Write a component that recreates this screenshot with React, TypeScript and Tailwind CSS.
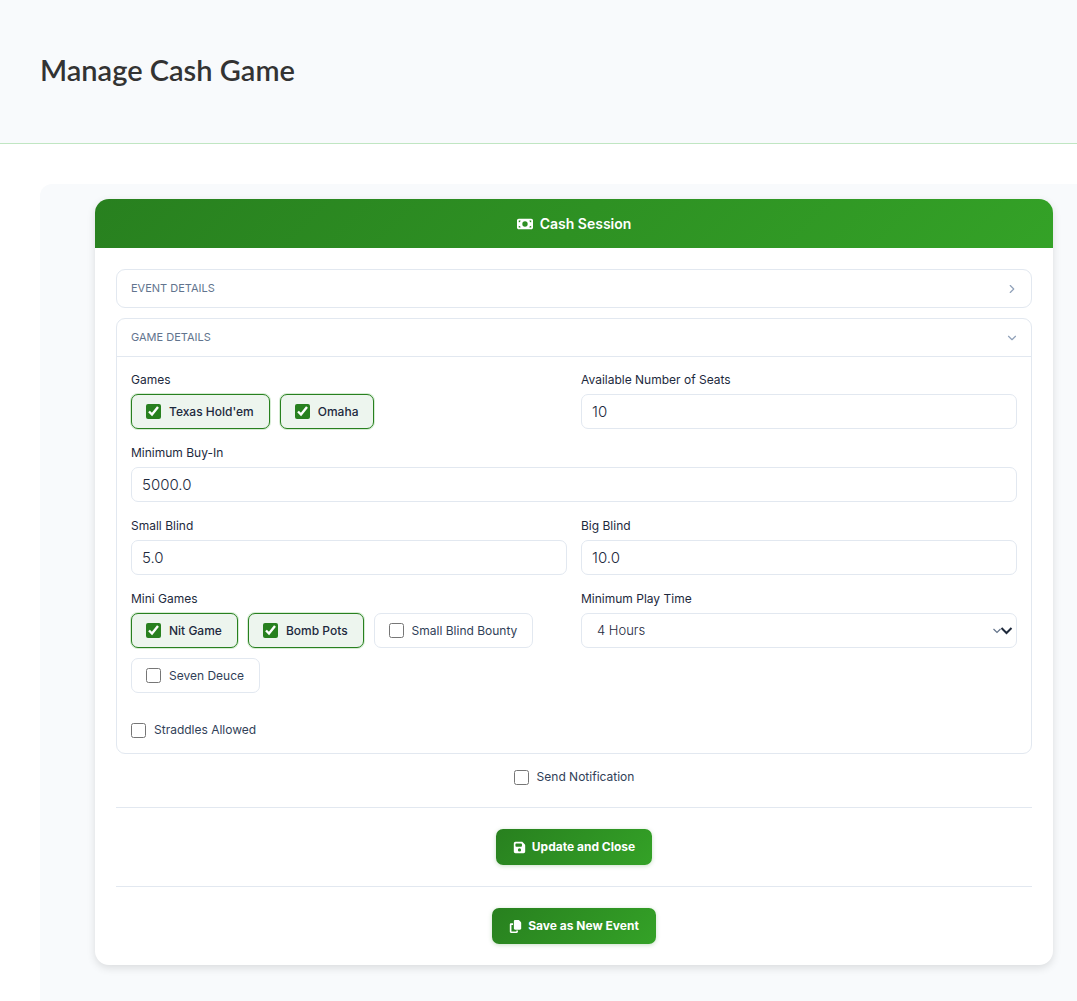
import { useState } from "react";
import type { ReactNode } from "react";
import { FaCopy, FaFloppyDisk, FaMoneyBill } from "react-icons/fa6";
import { LuChevronDown, LuChevronRight } from "react-icons/lu";

const games = [
  { id: "texas", label: "Texas Hold'em", checked: true },
  { id: "omaha", label: "Omaha", checked: true },
];

const miniGames = [
  { id: "nit", label: "Nit Game", checked: true },
  { id: "bomb", label: "Bomb Pots", checked: true },
  { id: "bounty", label: "Small Blind Bounty", checked: false },
  { id: "deuce", label: "Seven Deuce", checked: false },
];

const boxClass =
  "block h-[35px] w-full rounded-[7px] border border-slate-200 bg-white font-light text-slate-800 outline-none focus:border-[#28801f]";

const checkClass = "size-[15px] shrink-0 accent-[#28801f]";

function Chip({ id, label, checked }: { id: string; label: string; checked: boolean }) {
  const [on, setOn] = useState(checked);

  return (
    <label
      htmlFor={id}
      className={
        on
          ? "flex h-[35px] cursor-pointer items-center gap-2 rounded-[7px] border border-[#28801f] bg-[#edf5ee] pr-[15px] pl-3.5 text-xs font-medium text-slate-800 shadow-[0_0_0_1px_#34a22733]"
          : "flex h-[35px] cursor-pointer items-center gap-2 rounded-[7px] border border-slate-200 bg-white pr-[15px] pl-3.5 text-xs text-slate-700"
      }
    >
      <input id={id} type="checkbox" checked={on} onChange={() => setOn(!on)} className={checkClass} />
      {label}
    </label>
  );
}

function ChipGroup({ title, items }: { title: string; items: typeof games }) {
  return (
    <fieldset className="min-w-0">
      <legend className="mb-[3px] text-xs leading-[22px] text-slate-800">{title}</legend>
      <div className="flex flex-wrap gap-2.5">
        {items.map((item) => (
          <Chip key={item.id} {...item} />
        ))}
      </div>
    </fieldset>
  );
}

function TextField({ id, label, value, className }: { id: string; label: string; value: string; className?: string }) {
  return (
    <div className={className}>
      <label htmlFor={id} className="mb-[3px] block text-xs leading-[22px] text-slate-800">
        {label}
      </label>
      <input id={id} type="text" defaultValue={value} className={`${boxClass} px-2.5 text-[15px]`} />
    </div>
  );
}

function ActionButton({ icon, children }: { icon: ReactNode; children: ReactNode }) {
  return (
    <div className="flex justify-center border-t border-slate-200 py-[21px]">
      <button
        type="button"
        className="flex h-9 items-center gap-1.5 rounded-[7px] bg-linear-135 from-[#28801f] to-[#34a227] px-[17px] text-xs font-bold text-white shadow-[0_1px_4px_#28801f40]"
      >
        {icon}
        {children}
      </button>
    </div>
  );
}

export default function App() {
  return (
    <div className="flex min-h-screen flex-col overflow-x-hidden bg-white font-['Inter',sans-serif]">
      <header className="border-b border-[#c0e6c2] bg-slate-50 px-10 pt-[49px] pb-[53px]">
        <h1 className="font-['Lato',sans-serif] text-[29px] leading-[41px] font-semibold text-[#333]">Manage Cash Game</h1>
      </header>

      <main className="flex flex-1 flex-col pt-10 pl-10">
        <div className="flex-1 rounded-tl-xl bg-slate-50 pt-[15px] pr-6 pb-[35px] pl-[55px]">
          <form className="overflow-hidden rounded-[14px] bg-white shadow-[0_3px_8px_#0000001f]">
            <div className="flex h-[49px] items-center justify-center gap-[7px] bg-linear-135 from-[#28801f] to-[#34a227] text-white">
              <FaMoneyBill className="size-4" />
              <h2 className="text-sm font-semibold">Cash Session</h2>
            </div>

            <div className="px-[21px] pt-[21px]">
              {/* Event details, collapsed */}
              <section className="rounded-[9px] border border-slate-200">
                <button
                  type="button"
                  aria-expanded="false"
                  className="flex h-[37px] w-full items-center justify-between pr-3 pl-3.5 text-[11px] text-slate-500"
                >
                  EVENT DETAILS
                  <LuChevronRight className="size-3.5 text-slate-400" />
                </button>
              </section>

              {/* Game details */}
              <section className="mt-2.5 rounded-[9px] border border-slate-200">
                <button
                  type="button"
                  aria-expanded="true"
                  className="flex h-[38px] w-full items-center justify-between border-b border-slate-200 pr-3 pl-3.5 text-[11px] text-slate-500"
                >
                  GAME DETAILS
                  <LuChevronDown className="size-3.5 text-slate-400" />
                </button>

                <div className="px-3.5 pt-3 pb-[13px]">
                  <div className="grid grid-cols-2 gap-x-3.5 gap-y-[13px]">
                    <ChipGroup title="Games" items={games} />
                    <TextField id="seats" label="Available Number of Seats" value="10" />
                    <TextField id="buy-in" label="Minimum Buy-In" value="5000.0" className="col-span-2" />
                    <TextField id="small-blind" label="Small Blind" value="5.0" />
                    <TextField id="big-blind" label="Big Blind" value="10.0" />
                    <ChipGroup title="Mini Games" items={miniGames} />
                    <div>
                      <label htmlFor="play-time" className="mb-[3px] block text-xs leading-[22px] text-slate-800">
                        Minimum Play Time
                      </label>
                      <div className="relative">
                        <select
                          id="play-time"
                          defaultValue="4"
                          className={`${boxClass} appearance-none pr-8 pl-[15px] text-[13px]`}
                        >
                          <option value="2">2 Hours</option>
                          <option value="3">3 Hours</option>
                          <option value="4">4 Hours</option>
                          <option value="5">5 Hours</option>
                        </select>
                        <svg
                          viewBox="0 0 20 10"
                          className="pointer-events-none absolute top-3 right-1 h-2.5 w-5"
                          fill="none"
                          aria-hidden="true"
                        >
                          <path d="M0.5 4l3.5 3.5L7.5 4" stroke="#64748b" strokeWidth="1.2" />
                          <path d="M8.5 3l5 5 5-5" stroke="#1e293b" strokeWidth="2" />
                        </svg>
                      </div>
                    </div>
                  </div>

                  <label className="mt-[27px] flex w-fit items-center gap-2 text-xs leading-5 text-slate-700">
                    <input type="checkbox" className={checkClass} />
                    Straddles Allowed
                  </label>
                </div>
              </section>

              <label className="mx-auto mt-[13px] mb-5 flex w-fit items-center gap-2 text-xs leading-5 text-slate-700">
                <input type="checkbox" className={checkClass} />
                Send Notification
              </label>

              <ActionButton icon={<FaFloppyDisk className="size-[13px]" />}>Update and Close</ActionButton>
              <ActionButton icon={<FaCopy className="size-[13px]" />}>Save as New Event</ActionButton>
            </div>
          </form>
        </div>
      </main>
    </div>
  );
}
